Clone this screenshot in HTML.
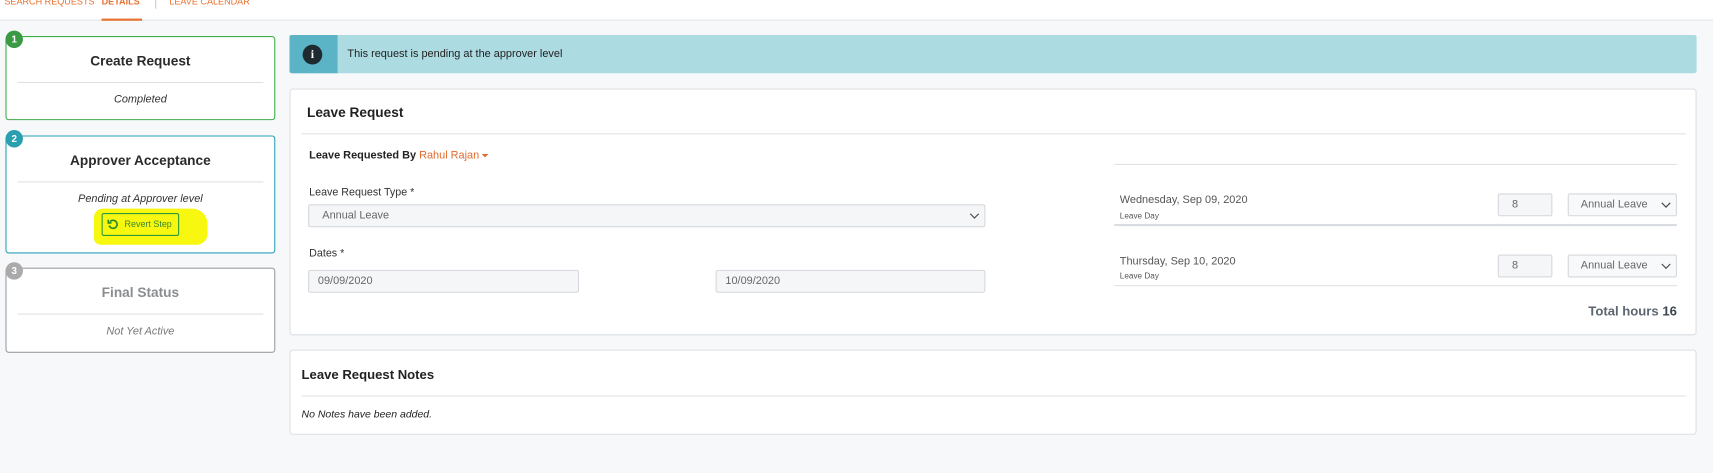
<!DOCTYPE html>
<html><head><meta charset="utf-8"><style>
*{box-sizing:border-box;margin:0;padding:0}
html,body{width:1713px;height:473px;overflow:hidden;background:#f7f8fa;font-family:"Liberation Sans",sans-serif}
#w{position:absolute;left:0;top:0;width:1568px;height:433px;transform:scale(1.09247);transform-origin:0 0}
.a{position:absolute}
.nav{left:0;top:0;width:1568px;height:19px;background:#fff;border-bottom:1px solid #e3e5e8}
.navt{font-size:8.3px;color:#e8712f;top:-4px;white-space:nowrap}
.card{background:#fff;border:1px solid #dcdfe3;border-radius:3px}
.step{left:5px;width:247px;background:#fff;border-radius:3px}
.badge{width:16px;height:16px;border-radius:50%;color:#fff;font-size:9px;font-weight:bold;text-align:center;line-height:16px;left:-1px;top:-6px}
.st{width:100%;text-align:center;font-size:12.5px;font-weight:bold;color:#2a2a2a}
.hr{height:1px;background:#dfe1e4}
.it{width:100%;text-align:center;font-size:10px;font-style:italic;color:#333}
.lbl{font-size:9.8px;color:#333}
.inp{background:#f5f6f8;border:1px solid #d5d8dc;border-radius:2px;font-size:10px;color:#666;padding-left:12px;line-height:19px}
.chev{position:absolute;right:6px;top:5px;width:6px;height:6px;border-right:1.5px solid #444;border-bottom:1.5px solid #444;transform:rotate(45deg)}
</style></head><body><div id="w">
<div class="a nav"></div>
<div class="a navt" style="left:4px">SEARCH REQUESTS</div>
<div class="a navt" style="left:93px;font-weight:bold">DETAILS</div>
<div class="a" style="left:93px;top:17px;width:37px;height:2px;background:#e8712f"></div>
<div class="a" style="left:142px;top:0;width:1px;height:8px;background:#ccc"></div>
<div class="a navt" style="left:155px">LEAVE CALENDAR</div>

<div class="a step" style="top:33px;height:77px;border:1px solid #3fae49">
 <div class="a badge" style="background:#3a9a43;">1</div>
 <div class="a st" style="top:15px">Create Request</div>
 <div class="a hr" style="left:10px;width:225px;top:41px"></div>
 <div class="a it" style="top:52px">Completed</div>
</div>
<div class="a step" style="top:124px;height:108px;border:1px solid #2ba2b5">
 <div class="a badge" style="background:#2a9fb0;">2</div>
 <div class="a st" style="top:15px">Approver Acceptance</div>
 <div class="a hr" style="left:10px;width:225px;top:41px"></div>
 <div class="a it" style="top:52px">Pending at Approver level</div>
</div>
<div class="a" style="left:86px;top:191px;width:104px;height:33px;background:#f7f70f;border-radius:8px 14px 10px 6px"></div>
<div class="a" style="left:93px;top:195px;width:71px;height:21px;border:1px solid #2a9a3a;border-radius:2px;font-size:8.2px;color:#3a8a2a;line-height:19px;padding-left:20px">Revert Step</div>
<svg class="a" style="left:98px;top:200px" width="11" height="11" viewBox="0 0 12 12"><path d="M3 3.2A4 4 0 1 1 2.2 7" fill="none" stroke="#2a8a2a" stroke-width="1.6"/><path d="M1.2 1.2V4.4H4.4" fill="none" stroke="#2a8a2a" stroke-width="1.6"/></svg>
<div class="a step" style="top:245px;height:78px;border:1px solid #9a9ea3">
 <div class="a badge" style="background:#aaa;">3</div>
 <div class="a st" style="top:15px;color:#8a8d90">Final Status</div>
 <div class="a hr" style="left:10px;width:225px;top:41px"></div>
 <div class="a it" style="top:52px;color:#777">Not Yet Active</div>
</div>

<div class="a" style="left:265px;top:32px;width:1288px;height:35px;background:#acdbe2;border-radius:2px"></div>
<div class="a" style="left:265px;top:32px;width:44px;height:35px;background:#5ab4c5;border-radius:2px 0 0 2px"></div>
<div class="a" style="left:277px;top:41px;width:18px;height:18px;border-radius:50%;background:#1f2a30;color:#fff;font-size:11px;font-weight:bold;text-align:center;line-height:18px;font-family:'Liberation Serif',serif">i</div>
<div class="a" style="left:318px;top:44px;font-size:10px;color:#222">This request is pending at the approver level</div>

<div class="a card" style="left:265px;top:81px;width:1288px;height:226px"></div>
<div class="a" style="left:281px;top:96px;font-size:12.5px;font-weight:bold;color:#222">Leave Request</div>
<div class="a hr" style="left:276px;top:122px;width:1267px"></div>
<div class="a" style="left:283px;top:137px;font-size:10px;font-weight:bold;color:#222">Leave Requested By <span style="color:#e06a2c;font-weight:normal">Rahul Rajan</span></div>
<div class="a" style="left:441px;top:141px;border:3.5px solid transparent;border-top-color:#e06a2c"></div>
<div class="a lbl" style="left:283px;top:171px">Leave Request Type *</div>
<div class="a inp" style="left:282px;top:187px;width:620px;height:21px">Annual Leave<span class="chev"></span></div>
<div class="a lbl" style="left:283px;top:227px">Dates *</div>
<div class="a inp" style="left:282px;top:247px;width:248px;height:21px;padding-left:8px">09/09/2020</div>
<div class="a inp" style="left:655px;top:247px;width:247px;height:21px;padding-left:8px">10/09/2020</div>

<div class="a hr" style="left:1020px;top:150px;width:515px"></div>
<div class="a" style="left:1025px;top:178px;font-size:10px;color:#555">Wednesday, Sep 09, 2020</div>
<div class="a" style="left:1025px;top:193px;font-size:7.5px;color:#555">Leave Day</div>
<div class="a inp" style="left:1371px;top:177px;width:50px;height:21px;padding-left:12px">8</div>
<div class="a inp" style="left:1435px;top:177px;width:100px;height:21px;padding-left:11px;background:#f8f9fa">Annual Leave<span class="chev"></span></div>
<div class="a" style="left:1020px;top:205px;width:515px;height:2px;background:#d9dce0"></div>
<div class="a" style="left:1025px;top:234px;font-size:10px;color:#555">Thursday, Sep 10, 2020</div>
<div class="a" style="left:1025px;top:248px;font-size:7.5px;color:#555">Leave Day</div>
<div class="a inp" style="left:1371px;top:233px;width:50px;height:21px;padding-left:12px">8</div>
<div class="a inp" style="left:1435px;top:233px;width:100px;height:21px;padding-left:11px;background:#f8f9fa">Annual Leave<span class="chev"></span></div>
<div class="a hr" style="left:1020px;top:261px;width:515px"></div>
<div class="a" style="left:1380px;top:278px;width:155px;text-align:right;font-size:12px;font-weight:bold;color:#5c6670">Total hours <span style="color:#3c4650">16</span></div>

<div class="a card" style="left:265px;top:320px;width:1288px;height:78px"></div>
<div class="a" style="left:276px;top:336px;font-size:12px;font-weight:bold;color:#222">Leave Request Notes</div>
<div class="a hr" style="left:276px;top:362px;width:1267px"></div>
<div class="a" style="left:276px;top:374px;font-size:9.6px;font-style:italic;color:#222">No Notes have been added.</div>
</div></body></html>
